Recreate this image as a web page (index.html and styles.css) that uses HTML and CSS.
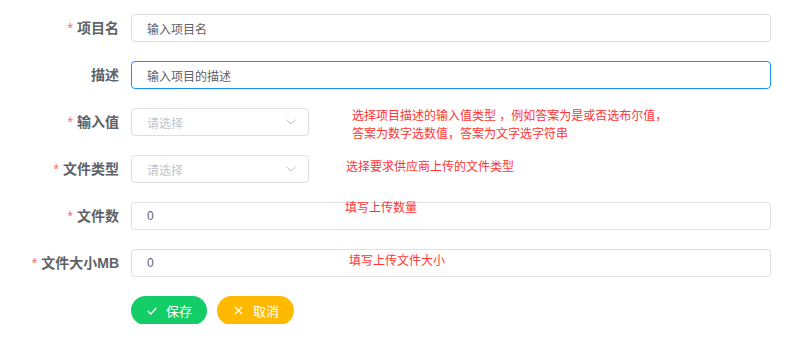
FILE: index.html
```html
<!DOCTYPE html>
<html>
    <head>
        <meta charset="UTF-8">
        <meta name="viewport" content="width=device-width, initial-scale=1.0">
        <title>项目</title>
        <link rel="stylesheet" href="styles.css">
    </head>
    <body>
        <form class="projform">
            <div class="formitem">
                <label class="itemlabel required">项目名</label>
                <div class="itemcontent">
                    <input class="textinput" value="输入项目名">
                </div>
            </div>

            <div class="formitem">
                <label class="itemlabel">描述</label>
                <div class="itemcontent">
                    <input class="textinput focused" value="输入项目的描述">
                </div>
            </div>

            <div class="formitem">
                <label class="itemlabel required">输入值</label>
                <div class="itemcontent">
                    <div class="selectbox">
                        <span class="placeholder">请选择</span>
                        <svg class="arrow" width="10" height="6" viewBox="0 0 10 6"><path d="M0.5 0.5 L5 5 L9.5 0.5" fill="none" stroke="#c0c4cc" stroke-width="1"/></svg>
                    </div>
                    <div class="hint hintone">选择项目描述的输入值类型 ，例如答案为是或否选布尔值，<br>答案为数字选数值，答案为文字选字符串</div>
                </div>
            </div>

            <div class="formitem">
                <label class="itemlabel required">文件类型</label>
                <div class="itemcontent">
                    <div class="selectbox">
                        <span class="placeholder">请选择</span>
                        <svg class="arrow" width="10" height="6" viewBox="0 0 10 6"><path d="M0.5 0.5 L5 5 L9.5 0.5" fill="none" stroke="#c0c4cc" stroke-width="1"/></svg>
                    </div>
                    <div class="hint hinttwo">选择要求供应商上传的文件类型</div>
                </div>
            </div>

            <div class="formitem">
                <label class="itemlabel required">文件数</label>
                <div class="itemcontent">
                    <input class="textinput" value="0">
                    <div class="hint floathint hintthree">填写上传数量</div>
                </div>
            </div>

            <div class="formitem">
                <label class="itemlabel required">文件大小MB</label>
                <div class="itemcontent">
                    <input class="textinput" value="0">
                    <div class="hint floathint hintfour">填写上传文件大小</div>
                </div>
            </div>

            <div class="formitem">
                <div class="itemlabel"></div>
                <div class="itemcontent buttons">
                    <button type="button" class="btn savebtn">
                        <svg class="btnicon" width="10" height="8" viewBox="0 0 10 8"><path d="M0.8 4 L3.8 7 L9.3 1" fill="none" stroke="#fff" stroke-width="1.3"/></svg>
                        保存
                    </button>
                    <button type="button" class="btn cancelbtn">
                        <svg class="btnicon" width="9" height="9" viewBox="0 0 9 9"><path d="M1 1 L8 8 M8 1 L1 8" fill="none" stroke="#fff" stroke-width="1.3"/></svg>
                        取消
                    </button>
                </div>
            </div>
        </form>
    </body>
</html>
```

FILE: styles.css
```css
* {
    font-family: "Liberation Sans", "Noto Sans CJK SC", sans-serif;
    box-sizing: border-box;
}
body {
    margin: 0;
    background-color: #fff;
}
.projform {
    display: flex;
    flex-direction: column;
    gap: 19px;
    padding: 14px 17px 0 0;
}
.formitem {
    display: flex;
    align-items: flex-start;
    height: 28px;
}
.itemlabel {
    width: 131px;
    flex-shrink: 0;
    padding-right: 12px;
    text-align: right;
    font-size: 14px;
    font-weight: bold;
    color: #606266;
    line-height: 28px;
}
.required::before {
    content: "*";
    color: #f56c6c;
    margin-right: 4px;
    font-weight: normal;
}
.itemcontent {
    flex: 1;
    position: relative;
    display: flex;
    align-items: flex-start;
}
.textinput {
    width: 100%;
    height: 28px;
    border: 1px solid #dcdfe6;
    border-radius: 4px;
    padding: 0 15px;
    font-size: 12px;
    color: #606266;
    outline: none;
}
.focused {
    border-color: #1890ff;
}
.selectbox {
    width: 178px;
    height: 28px;
    flex-shrink: 0;
    border: 1px solid #dcdfe6;
    border-radius: 4px;
    padding: 0 12px 0 15px;
    display: flex;
    align-items: center;
    justify-content: space-between;
}
.placeholder {
    font-size: 12px;
    color: #c0c4cc;
}
.hint {
    font-size: 12px;
    color: #ff3535;
    line-height: 18px;
}
.hintone {
    margin-left: 43px;
    margin-top: -1px;
}
.hinttwo {
    margin-left: 37px;
    margin-top: 3px;
}
.floathint {
    position: absolute;
    white-space: nowrap;
}
.hintthree {
    left: 214px;
    top: -3px;
}
.hintfour {
    left: 218px;
    top: 3px;
}
.buttons {
    gap: 10px;
}
.btn {
    height: 29px;
    border: none;
    border-radius: 15px;
    padding: 0 15px 0 16px;
    color: #fff;
    font-size: 13px;
    display: flex;
    align-items: center;
    cursor: pointer;
}
.btnicon {
    margin-right: 9px;
}
.savebtn {
    background-color: #13ce66;
}
.cancelbtn {
    background-color: #ffba00;
    padding-left: 17px;
}
.cancelbtn .btnicon {
    margin-right: 10px;
}
```
